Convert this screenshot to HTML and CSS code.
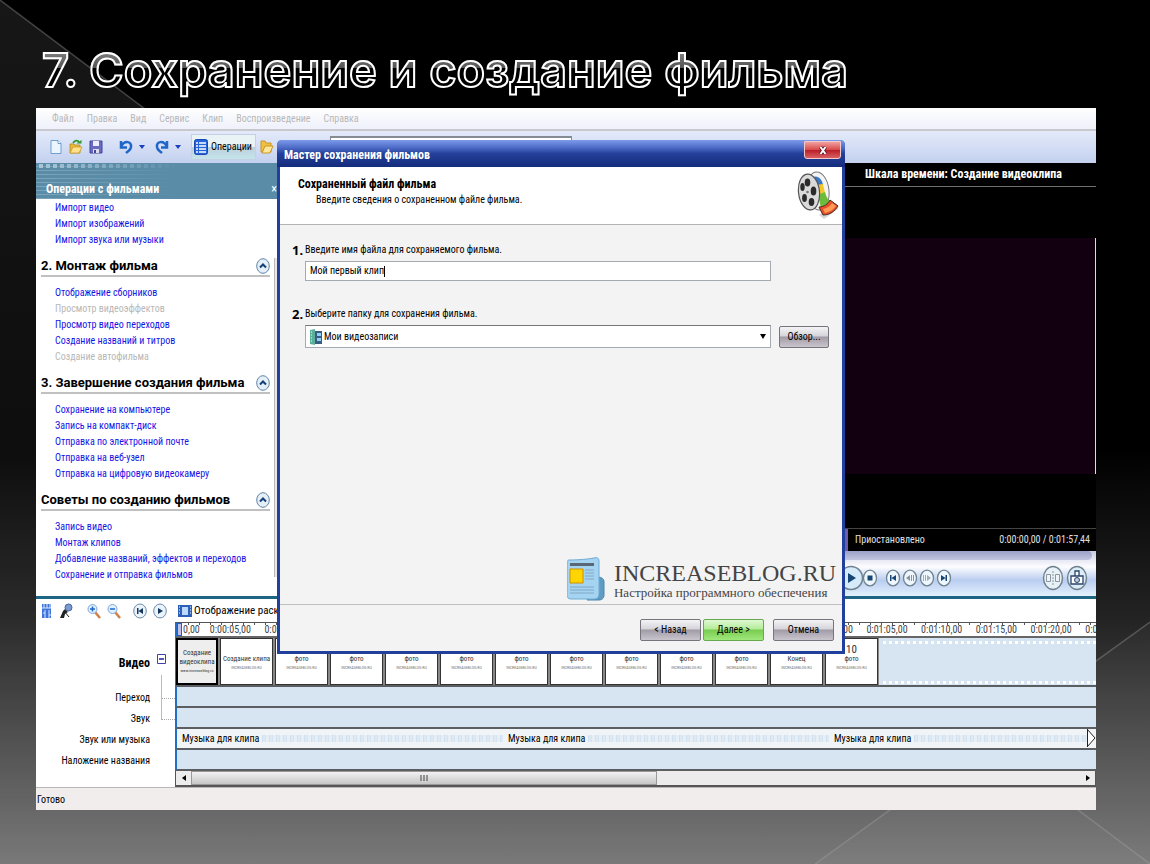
FILE: index.html
```html
<!DOCTYPE html>
<html lang="ru">
<head>
<meta charset="utf-8">
<title>7. Сохранение и создание фильма</title>
<meta name="viewport" content="width=device-width, initial-scale=1">
<link rel="stylesheet" href="styles.css">
</head>
<body>
<svg class="backdrop" viewBox="0 0 1150 864" preserveAspectRatio="none" aria-hidden="true">
  <defs>
    <linearGradient id="facet" x1="0" y1="0" x2="0" y2="1"><stop offset="0" stop-color="#fff" stop-opacity=".09"/><stop offset="1" stop-color="#fff" stop-opacity=".02"/></linearGradient>
  </defs>
  <path d="M0 0L1150 864H0z" fill="url(#facet)"/>
  <path d="M1150 622V864H815z" fill="#fff" fill-opacity=".03"/>
  <path d="M0 0L1150 864M1150 622L815 864" fill="none" stroke="#aaa" stroke-opacity=".35" stroke-width="1.500"/>
</svg>
<main class="slide">
  <h1 class="slide-title">7. Сохранение и создание фильма</h1>

  <div class="app">
    <nav class="menu">
      <a href="#">Файл</a><a href="#">Правка</a><a href="#">Вид</a><a href="#">Сервис</a><a href="#">Клип</a><a href="#">Воспроизведение</a><a href="#">Справка</a>
    </nav>
    <div class="toolbar">
      <button class="tool" aria-label="Создать"><svg width="14" height="16" viewBox="0 0 14 16"><path d="M2 1.500h7l3 3v10H2z" fill="#e9f5ff" stroke="#6f9fd0"/><path d="M9 1.500v3h3" fill="#fff" stroke="#6f9fd0"/></svg></button>
      <button class="tool" aria-label="Открыть"><svg width="14" height="16" viewBox="0 0 14 16"><path d="M1 5h4l1 1h5v8H1z" fill="#e9b93c" stroke="#b98a1e" stroke-width=".8"/><path d="M1 14L4 8h9l-3 6z" fill="#ffe28a" stroke="#c89a2a" stroke-width=".8"/><path d="M4 4c2-3 5-3 6-.5" fill="none" stroke="#2b9a2b" stroke-width="1.800"/><path d="M7.500 4.500h5V1z" fill="#2b9a2b"/></svg></button>
      <button class="tool" aria-label="Сохранить"><svg width="14" height="16" viewBox="0 0 14 16"><path d="M1 2h12v12H1z" fill="#6a6ac0" stroke="#45459a"/><path d="M4 2h6v5H4z" fill="#eef"/><path d="M4 10h6v4H4z" fill="#dde"/><path d="M5 11h2v3H5z" fill="#45459a"/></svg></button>
      <button class="tool tool-arrow" aria-label="Отменить"><svg width="28" height="16" viewBox="0 0 28 16"><path d="M2 2v6.500h6M2 8C5 1 13 2 12 8c0 3-3 4-5 6" fill="none" stroke="#1f66c8" stroke-width="2.500"/><path d="M20 6h6l-3 4z" fill="#1c40c0"/></svg></button>
      <button class="tool tool-arrow" aria-label="Вернуть"><svg width="28" height="16" viewBox="0 0 28 16"><path d="M12 2v6.500H6M12 8C9 1 1 2 2 8c0 3 3 4 5 6" fill="none" stroke="#1f66c8" stroke-width="2.500"/><path d="M20 6h6l-3 4z" fill="#1c40c0"/></svg></button>
      <button class="tool-tasks"><svg width="14" height="16" viewBox="0 0 14 16"><rect x=".5" y=".5" width="13" height="15" rx="2" fill="#2565dc" stroke="#1848b0"/><path d="M2 4h2M2 7h2M2 10h2M2 13h2M5 4h7M5 7h7M5 10h7M5 13h7" stroke="#fff" stroke-width="1.300"/></svg>Операции</button>
      <button class="tool" aria-label="Сборники"><svg width="14" height="16" viewBox="0 0 14 16"><path d="M1 2h4l1 2h5v9H1z" fill="#f0c040" stroke="#c8962a"/><path d="M2 14l3-7h8l-3 7z" fill="#ffe698" stroke="#c8962a"/></svg></button>
      <span class="collection"></span>
    </div>

    <div class="workspace">
      <aside class="tasks">
        <header class="tasks-head"><h2>Операции с фильмами</h2><button class="tasks-close" aria-label="Закрыть">×</button></header>
        <div class="tasks-body">
          <div class="tasks-content">
            <ul><li><a href="#">Импорт видео</a></li><li><a href="#">Импорт изображений</a></li><li><a href="#">Импорт звука или музыки</a></li></ul>
            <section>
              <h3>2. Монтаж фильма <button class="fold" aria-label="Свернуть"><svg width="14" height="16" viewBox="0 0 14 16"><ellipse cx="7" cy="8" rx="6.300" ry="7.300" fill="#e4eff8" stroke="#5f84a8"/><path d="M4 9.500l3-3 3 3" fill="none" stroke="#153f78" stroke-width="2"/></svg></button></h3>
              <ul><li><a href="#">Отображение сборников</a></li><li class="off">Просмотр видеоэффектов</li><li><a href="#">Просмотр видео переходов</a></li><li><a href="#">Создание названий и титров</a></li><li class="off">Создание автофильма</li></ul>
            </section>
            <section>
              <h3>3. Завершение создания фильма <button class="fold" aria-label="Свернуть"><svg width="14" height="16" viewBox="0 0 14 16"><ellipse cx="7" cy="8" rx="6.300" ry="7.300" fill="#e4eff8" stroke="#5f84a8"/><path d="M4 9.500l3-3 3 3" fill="none" stroke="#153f78" stroke-width="2"/></svg></button></h3>
              <ul><li><a href="#">Сохранение на компьютере</a></li><li><a href="#">Запись на компакт-диск</a></li><li><a href="#">Отправка по электронной почте</a></li><li><a href="#">Отправка на веб-узел</a></li><li><a href="#">Отправка на цифровую видеокамеру</a></li></ul>
            </section>
            <section>
              <h3>Советы по созданию фильмов <button class="fold" aria-label="Свернуть"><svg width="14" height="16" viewBox="0 0 14 16"><ellipse cx="7" cy="8" rx="6.300" ry="7.300" fill="#e4eff8" stroke="#5f84a8"/><path d="M4 9.500l3-3 3 3" fill="none" stroke="#153f78" stroke-width="2"/></svg></button></h3>
              <ul><li><a href="#">Запись видео</a></li><li><a href="#">Монтаж клипов</a></li><li><a href="#">Добавление названий, эффектов и переходов</a></li><li><a href="#">Сохранение и отправка фильмов</a></li></ul>
            </section>
          </div>
          <span class="tasks-thumb"></span>
        </div>
      </aside>

      <section class="monitor">
        <h2 class="monitor-title">Шкала времени: Создание видеоклипа</h2>
        <div class="screen"><div class="frame"></div></div>
        <div class="monitor-status"><span>Приостановлено</span><span class="clock">0:00:00,00 / 0:01:57,44</span></div>
        <div class="controls">
          <div class="seek"></div>
          <div class="buttons">
            <button class="round big" aria-label="Воспроизвести"><svg width="28" height="28" viewBox="0 0 28 28"><circle cx="14" cy="14" r="11.500" fill="#d5ebfa" stroke="#71828f" stroke-width="1.500"/><path d="M11 9l8 5-8 5z" fill="#174674"/></svg></button>
            <button class="round" aria-label="Стоп"><svg width="16" height="18" viewBox="0 0 16 18"><ellipse cx="8" cy="9" rx="6.500" ry="7.800" fill="#eef7fd" stroke="#71828f" stroke-width="1.300"/><path d="M5.500 6.500h5v5h-5z" fill="#174674"/></svg></button>
            <button class="round gap" aria-label="В начало"><svg width="16" height="18" viewBox="0 0 16 18"><ellipse cx="8" cy="9" rx="6.500" ry="7.800" fill="#eef7fd" stroke="#71828f" stroke-width="1.300"/><path d="M5 6h1.500v6H5zM11 6v6L6.500 9z" fill="#174674"/></svg></button>
            <button class="round" aria-label="Кадр назад"><svg width="16" height="18" viewBox="0 0 16 18"><ellipse cx="8" cy="9" rx="6.500" ry="7.800" fill="#eef7fd" stroke="#71828f" stroke-width="1.300"/><path d="M8 6v6L4 9zM9 6h1v6H9zM11 6h1v6h-1z" fill="#8a949c"/></svg></button>
            <button class="round" aria-label="Кадр вперед"><svg width="16" height="18" viewBox="0 0 16 18"><ellipse cx="8" cy="9" rx="6.500" ry="7.800" fill="#eef7fd" stroke="#71828f" stroke-width="1.300"/><path d="M8 6v6l4-3zM6 6h1v6H6zM4 6h1v6H4z" fill="#a5adb4"/></svg></button>
            <button class="round" aria-label="В конец"><svg width="16" height="18" viewBox="0 0 16 18"><ellipse cx="8" cy="9" rx="6.500" ry="7.800" fill="#eef7fd" stroke="#71828f" stroke-width="1.300"/><path d="M9.500 6H11v6H9.500zM5 6v6l4.500-3z" fill="#174674"/></svg></button>
            <button class="round end" aria-label="Разделить"><svg width="22" height="26" viewBox="0 0 22 26"><ellipse cx="11" cy="13" rx="9.500" ry="11.500" fill="#e6f1f8" stroke="#71828f" stroke-width="1.500"/><path d="M4.500 9.500h4v7h-4zM13.500 9.500h4v7h-4z" fill="#eef4f8" stroke="#8d979f"/><path d="M11 6v14" stroke="#8d979f" stroke-dasharray="2 1"/></svg></button>
            <button class="round" aria-label="Снимок"><svg width="22" height="26" viewBox="0 0 22 26"><ellipse cx="11" cy="13" rx="9.500" ry="11.500" fill="#dbecf8" stroke="#71828f" stroke-width="1.500"/><path d="M5 11h12v8H5zM9 6h4v5H9z" fill="#fff" stroke="#2a4468" stroke-width="1.300"/><circle cx="11" cy="15" r="2.500" fill="#b9cde0" stroke="#2a4468"/></svg></button>
          </div>
        </div>
      </section>
    </div>

    <section class="timeline">
      <div class="timeline-tools">
        <button class="tool" aria-label="Уровни звука"><svg width="12" height="16" viewBox="0 0 12 16"><path d="M1 1h9v14H1z" fill="#3f74dc"/><path d="M1 5h9M3 1v4M6 1v4M9 1v4M4 7v8M8 7v8M4 10H2M8 12h2" stroke="#dce9ff"/></svg></button>
        <button class="tool" aria-label="Комментарий"><svg width="14" height="16" viewBox="0 0 14 16"><path d="M1 15l3-7 2-2 3 3-3 2-1 4z" fill="#222"/><path d="M5 8l5 6" stroke="#222"/><circle cx="9.500" cy="4.500" r="3.500" fill="#7c9ad0" stroke="#4464a0"/></svg></button>
        <button class="tool spaced" aria-label="Увеличить"><svg width="14" height="16" viewBox="0 0 14 16"><path d="M8 9l5 6" stroke="#d08048" stroke-width="2.500"/><circle cx="5.500" cy="6" r="4.500" fill="#dff0ff" stroke="#7fa6d8"/><path d="M3 6h5M5.500 3.500v5" stroke="#1f66c8" stroke-width="1.500"/></svg></button>
        <button class="tool" aria-label="Уменьшить"><svg width="14" height="16" viewBox="0 0 14 16"><path d="M8 9l5 6" stroke="#d08048" stroke-width="2.500"/><circle cx="5.500" cy="6" r="4.500" fill="#dff0ff" stroke="#7fa6d8"/><path d="M3 6h5" stroke="#1f66c8" stroke-width="1.500"/></svg></button>
        <button class="tool farther" aria-label="К началу"><svg width="14" height="16" viewBox="0 0 14 16"><ellipse cx="7" cy="8" rx="6.300" ry="7" fill="#eaf2fa" stroke="#6c8ba8"/><path d="M4 5h1.500v6H4zM10 5v6L5.500 8z" fill="#17365c"/></svg></button>
        <button class="tool" aria-label="Воспроизвести шкалу"><svg width="14" height="16" viewBox="0 0 14 16"><ellipse cx="7" cy="8" rx="6.300" ry="7" fill="#eaf2fa" stroke="#6c8ba8"/><path d="M5 5v6l5-3z" fill="#17365c"/></svg></button>
        <button class="storyboard"><svg width="14" height="14" viewBox="0 0 14 14"><path d="M0 1h14v12H0z" fill="#2b5fb8"/><path d="M4 3h6v8H4z" fill="#bcd8fa"/><path d="M1 3h1M1 6h1M1 9h1M12 3h1M12 6h1M12 9h1" stroke="#fff"/></svg>Отображение раска</button>
      </div>
      <div class="row ruler-row"><span class="label"></span>
        <div class="track ruler"><div class="codes"><span class="origin">0,00</span><span>0:00:05,00</span><span>0:00:10,00</span><span></span><span></span><span></span><span></span><span></span><span></span><span></span><span></span><span></span><span>0:01:00,00</span><span>0:01:05,00</span><span>0:01:10,00</span><span>0:01:15,00</span><span>0:01:20,00</span><span>0:0</span></div><i class="playhead"></i></div>
      </div>
      <div class="row video-row"><span class="label strong">Видео</span><button class="minus" aria-label="Свернуть дорожку"><svg width="9" height="10" viewBox="0 0 9 10"><path d="M.5.500h8v9h-8z" fill="#fff" stroke="#4040a8"/><path d="M2 5h5" stroke="#2020a0" stroke-width="1.500"/></svg></button>
        <div class="track clips">
          <div class="clip first"><b>Создание видеоклипа</b><small>www.increaseblog.ru</small></div>
          <div class="clip"><span>Создание клипа</span><small>INCREASEBLOG.RU</small></div>
          <div class="clip"><span>фото</span><small>INCREASEBLOG.RU</small></div>
          <div class="clip"><span>фото</span><small>INCREASEBLOG.RU</small></div>
          <div class="clip"><span>фото</span><small>INCREASEBLOG.RU</small></div>
          <div class="clip"><span>фото</span><small>INCREASEBLOG.RU</small></div>
          <div class="clip"><span>фото</span><small>INCREASEBLOG.RU</small></div>
          <div class="clip"><span>фото</span><small>INCREASEBLOG.RU</small></div>
          <div class="clip"><span>фото</span><small>INCREASEBLOG.RU</small></div>
          <div class="clip"><span>фото</span><small>INCREASEBLOG.RU</small></div>
          <div class="clip"><span>фото</span><small>INCREASEBLOG.RU</small></div>
          <div class="clip"><span>Конец</span><small>INCREASEBLOG.RU</small></div>
          <div class="clip numbered"><em>10</em><span>фото</span><small>INCREASEBLOG.RU</small></div>
          <div class="empty"></div>
        </div>
      </div>
      <div class="row branch"><span class="label">Переход</span><div class="track"></div></div>
      <div class="row branch"><span class="label">Звук</span><div class="track"></div></div>
      <div class="row"><span class="label">Звук или музыка</span>
        <div class="track music">
          <div class="tune">Музыка для клипа</div><div class="tune">Музыка для клипа</div><div class="tune last">Музыка для клипа</div>
          <svg width="9" height="18" viewBox="0 0 9 18"><path d="M.500 0v18M0 0l8 9-8 9" fill="#fff" stroke="#222"/></svg>
        </div>
      </div>
      <div class="row"><span class="label">Наложение названия</span><div class="track"></div></div>
      <div class="row scroll-row"><span class="label"></span>
        <div class="scroll"><button aria-label="Влево"><svg width="4" height="6" viewBox="0 0 4 6"><path d="M4 0v6L0 3z"/></svg></button><span class="thumb"><svg width="8" height="6" viewBox="0 0 8 6"><path d="M1 0v6M4 0v6M7 0v6" stroke="#444"/></svg></span><button class="to-end" aria-label="Вправо"><svg width="4" height="6" viewBox="0 0 4 6"><path d="M0 0v6l4-3z"/></svg></button></div>
      </div>
    </section>
    <footer class="status">Готово</footer>

    <form class="dialog" role="dialog" aria-labelledby="wizard-title">
      <header class="dialog-bar"><h2 id="wizard-title">Мастер сохранения фильмов</h2>
        <button type="button" class="dialog-close" aria-label="Закрыть"><svg width="10" height="9" viewBox="0 0 10 9"><path d="M2.500 1l5 7M7.500 1l-5 7" stroke="#5a1020" stroke-width="3.500"/><path d="M2.500 1l5 7M7.500 1l-5 7" stroke="#fff" stroke-width="2"/></svg></button></header>
      <div class="dialog-head">
        <div><h3>Сохраненный файл фильма</h3><p>Введите сведения о сохраненном файле фильма.</p></div>
        <svg width="42" height="50" viewBox="0 0 42 50">
          <path d="M22 44l5 4 14-10-2-6z" fill="#bbb" opacity=".6"/>
          <ellipse cx="21" cy="20" rx="11" ry="19" transform="rotate(-6 21 20)" fill="#f4f4f4" stroke="#777"/>
          <path d="M16 6c5-2 9 2 10 8l-6 3z" fill="#3a78c8"/><path d="M18 14l8-1 2 9-6 3z" fill="#f5c628"/><path d="M21 24l7-3c1 4 3 8 5 10l-9 6z" fill="#6cbb3c"/><path d="M22 36c5 0 9-3 11-7l8 6c-3 5-8 9-15 9z" fill="#e8502a" stroke="#4a2a20"/>
          <path d="M26 38c5-1 8-4 9-6l4 3c-3 4-7 6-11 7z" fill="#ff9a58"/>
          <ellipse cx="12" cy="21" rx="10.500" ry="18" transform="rotate(-6 12 21)" fill="#dadada" stroke="#555" stroke-width="1.200"/>
          <g fill="#2b2b2b"><ellipse cx="10.500" cy="11.500" rx="2.800" ry="4"/><ellipse cx="16.500" cy="20" rx="2.800" ry="4.500"/><ellipse cx="5.500" cy="16" rx="2.200" ry="4"/><ellipse cx="7.500" cy="27" rx="2.400" ry="4"/><ellipse cx="14.500" cy="31" rx="2.800" ry="4"/></g><circle cx="10.500" cy="21" r="1.300" fill="#777"/>
        </svg>
      </div>
      <div class="dialog-body">
        <div class="field"><label for="movie-name"><b>1.</b>Введите имя файла для сохраняемого фильма.</label>
          <div class="text-box"><input id="movie-name" type="text" value="Мой первый клип"><i class="caret"></i></div></div>
        <div class="field"><label for="movie-folder"><b>2.</b>Выберите папку для сохранения фильма.</label>
          <div class="folder-row"><div class="select-box"><svg width="12" height="16" viewBox="0 0 12 16"><path d="M0 1l5-1v16l-5-1z" fill="#5bb09a"/><path d="M5 2h7v13H5z" fill="#3a5c80"/><path d="M7 4h4v3H7zM7 9h4v3H7z" fill="#8fd0f8"/><path d="M1 3h1M1 6h1M1 9h1M1 12h1" stroke="#e8fff4"/></svg>
            <select id="movie-folder"><option>Мои видеозаписи</option></select><svg width="6" height="5" viewBox="0 0 6 5"><path d="M0 0h6L3 5z"/></svg></div>
            <button type="button" class="btn browse">Обзор...</button></div></div>
        <div class="brand">
          <svg width="38" height="44" viewBox="0 0 38 44"><path d="M30 20c5 0 7 2 7 5v13c0 4-3 5-5 5H20z" fill="#5f9cc4" stroke="#4a86ae"/><path d="M2 3C12 3 22 2 27 1c3-1 5 0 5 3v32c0 5-2 6-6 6H4c-3 0-4-2-4-4V5c0-1 1-2 2-2z" fill="#a5d3f2" stroke="#70acd4"/><path d="M3 6h24v3H3z" fill="#5a6875"/><path d="M18 13h9M18 16h9M18 19h9M18 22h9M3 30h24M3 33h24M3 36h24" stroke="#80a9c6"/><path d="M3 12h13v14H3z" fill="#ffd500" stroke="#d09000"/></svg>
          <div><strong>INCREASEBLOG.RU</strong><span>Настройка программного обеспечения</span></div>
        </div>
      </div>
      <footer class="dialog-foot"><button type="button" class="btn">&lt; Назад</button><button type="button" class="btn next">Далее &gt;</button><button type="button" class="btn cancel">Отмена</button></footer>
    </form>
  </div>
</main>
</body>
</html>
```

FILE: styles.css
```css
* { box-sizing: border-box; }
body {
  margin: 0;
  min-height: 100vh;
  font: 10px/16px "Roboto Condensed", Roboto, sans-serif;
  color: #000;
  background: linear-gradient(#000 0%, #000 52%, #242424 72%, #777 100%) #000;
}
h1, h2, h3, p, ul { margin: 0; padding: 0; font-weight: normal; font-size: inherit; }
ul { list-style: none; }
a { color: inherit; text-decoration: none; }
i, em { font-style: normal; }
svg { display: block; flex: none; }
button { padding: 0; border: 0; background: none; font: inherit; color: inherit; }
input, select { font: inherit; color: inherit; }

.backdrop { position: fixed; inset: 0; width: 100%; height: 100%; z-index: -1; }
.slide { padding: 42px 54px 54px 36px; }
.slide-title {
  width: max-content;
  padding-left: 6px;
  margin-bottom: 10px;
  font: 600 47px/56px "Inter", "Open Sans", sans-serif;
  color: transparent;
  background: linear-gradient(#999 0%, #555 46%, #000 47%);
  background-clip: text;
  -webkit-background-clip: text;
  -webkit-text-stroke: 2px #fff;
}

.app { position: relative; background: #fff; }
.menu {
  display: flex; align-items: center; gap: 13px;
  height: 23px; padding-left: 16px;
  color: #b8b8b8;
  background: linear-gradient(#fff, #eef0fb);
  border-bottom: 2px solid #c9c9cd;
}
.toolbar {
  display: flex; align-items: center; gap: 6px;
  height: 32px; padding-left: 13px;
  background: linear-gradient(#e4eafa, #c3d1ef);
}
.tool-arrow { margin-left: 10px; margin-right: -6px; }
.tool-arrow + .tool-arrow { margin-left: 8px; }
.tool-arrow + .tool-tasks { margin-left: 8px; }
.tool-tasks {
  display: flex; align-items: center; gap: 3px;
  min-width: 65px; height: 26px; padding: 0 2px;
  background: linear-gradient(#e9f2f4 0 50%, #bccfdc 50%, #c5e4ea);
  border: 1px solid #c4d0e4;
}
.tool-tasks + .tool { margin-left: -2px; }
.collection { align-self: flex-start; width: 242px; height: 10px; margin: 5px 0 0 50px; background: #fff; border: 1px solid #858b94; border-top-width: 2px; }

.workspace { display: flex; height: 436px; border-bottom: 3px solid #1c6684; }
.tasks { width: 241px; }
.tasks-head {
  display: flex; align-items: flex-end; justify-content: space-between;
  height: 36px; padding: 0 0 2px 10px;
  font-size: 12px; color: #fff;
  background:
    linear-gradient(90deg, transparent, #5a8ca8 140px),
    repeating-linear-gradient(90deg, transparent 0 3px, #a9c8d8 3px 7px) 0 1px / 100% 4px no-repeat,
    repeating-linear-gradient(#5a8ca8 0 3px, #7ba6bc 3px 4px);
}
.tasks-head h2 { font-weight: bold; }
.tasks-body { display: flex; padding-top: 1px; }
.tasks-content { flex: 1; min-width: 0; padding: 0 4px 0 5px; color: #1414e6; }
.tasks-content li { padding-left: 14px; white-space: nowrap; }
.tasks-content .off { color: #b8b8b8; }
.tasks-content section { padding-top: 8px; }
.tasks-content h3 {
  display: flex; justify-content: space-between; align-items: center;
  height: 21px; margin-bottom: 8px;
  font: bold 13px/20px Roboto, sans-serif;
  color: #000; white-space: nowrap;
  border-bottom: 2px solid #c0c0c0;
}
.tasks-thumb { width: 3px; height: 319px; margin-top: 58px; background: #e8e8e8; border-left: 1px solid #b8b8b8; }

.monitor { display: flex; flex-direction: column; width: 251px; margin-left: auto; background: #000; color: #e0e0e0; }
.monitor-title { height: 24px; padding-right: 14px; font-size: 12px; font-weight: bold; line-height: 22px; color: #fff; text-align: center; border-bottom: 1px solid #707070; }
.screen { flex: 1; padding: 51px 0 54px; border-bottom: 1px solid #444; }
.frame { height: 100%; background: #120010; border-right: 1px solid #ddd; }
.monitor-status { display: flex; justify-content: space-between; padding: 3px 6px 3px 7px; border-left: 3px solid #6a5cae; }
.controls { background: linear-gradient(#c6cbe4, #fdfdff 35%, #b9cdf0 65%, #e3f1fd); }
.seek { height: 9px; margin-right: 4px; background: linear-gradient(#9aa0c8, #c2c6e0); border-radius: 0 5px 5px 0; }
.buttons { display: flex; align-items: center; height: 36px; }
.big { margin-left: -8px; margin-right: -4px; }
.gap { margin-left: 7px; }
.round + .round:not(.gap):not(.end):not(:last-child) { margin-left: 1px; }
.end { margin-left: auto; }
.round:last-child { margin: 0 8px 0 2px; }

.timeline-tools { display: flex; align-items: center; gap: 6px; height: 23px; padding-left: 5px; }
.spaced { margin-left: 8px; }
.farther { margin-left: 6px; }
.storyboard { display: flex; align-items: center; gap: 2px; margin-left: 5px; font-size: 11px; }
.row { display: flex; align-items: center; position: relative; }
.label { width: 139px; padding-right: 25px; text-align: right; white-space: nowrap; }
.strong { font-size: 12px; font-weight: bold; }
.track { flex: 1; min-width: 0; height: 21px; background: #d7e5f2; border-left: 2px solid #1f6fc8; border-bottom: 2px solid #5c5f62; overflow: hidden; }
.ruler { position: relative; height: 16px; color: #444; background: #fff; border-top: 1px solid #555; border-bottom: 2px solid #666; }
.codes { display: grid; grid-template-columns: repeat(18, 1fr); margin: 0 -44px 0 -22px; line-height: 14px; background: repeating-linear-gradient(90deg, #555 0 1px, transparent 1px 11px) 0 0 / 100% 2px no-repeat; }
.origin { padding-left: 28px; }
.playhead { position: absolute; left: 0; top: 0; width: 5px; height: 13px; background: #c3bfe8; border: 1px solid #2060c0; }
.minus { position: absolute; left: 121px; top: 16px; }
.video-row .track { display: flex; gap: 2px; height: 49px; border-left-width: 1px; }
.clip {
  display: flex; flex-direction: column; align-items: center; justify-content: center;
  flex: 0 0 53px; height: 47px; padding-top: 4px;
  font-size: 7px; line-height: 9px; color: #333; text-align: center;
  background: #fff; border: 1px solid #333; outline: 1px solid #888;
  overflow: hidden;
}
.clip em { font-size: 11px; line-height: 11px; }
.clip small { font-size: 4px; line-height: 8px; color: #777; }
.numbered { padding: 0 0 7px; }
.first { flex-basis: 42px; padding: 0; background: #eee; border: 2px solid #000; }
.first b { font-weight: normal; }
.first small { color: #333; }
.empty {
  flex: 1;
  background:
    repeating-linear-gradient(90deg, transparent 0 3px, #fff 3px 6px) 0 3px / 100% 3px no-repeat,
    repeating-linear-gradient(90deg, transparent 0 3px, #fff 3px 6px) 0 43px / 100% 3px no-repeat;
}
.branch::before { content: ""; position: absolute; left: 125px; top: -12px; width: 13px; height: 23px; border-left: 1px solid #bbb; border-bottom: 1px dotted #aaa; }
.music { display: flex; background: #f1f4f7; }
.tune { display: flex; align-items: center; flex: 0 0 326px; padding-left: 5px; line-height: 19px; white-space: nowrap; }
.tune::after { content: ""; flex: 1; height: 7px; margin-left: 3px; background: repeating-linear-gradient(90deg, #cfe0f1 0 1px, #dfe9f4 1px 3px, #d6e4f2 3px 4px, #e6eef6 4px 7px); }
.last { flex: 1; min-width: 0; }
.scroll { display: flex; flex: 1; height: 16px; background: #ececec; border: 1px solid #555; border-top: 0; border-bottom-width: 2px; }
.scroll button { display: grid; place-items: center; width: 15px; }
.thumb { display: grid; place-items: center; flex: 0 0 466px; background: linear-gradient(#f2f2f2, #c6c6c6); border: 1px solid #999; }
.scroll .to-end { margin-left: auto; }
.status { padding: 4px 1px 2px; background: #f0edec; border-top: 1px solid #b8b8b8; }

.dialog {
  position: absolute; top: 32px; left: 241px; right: 251px;
  display: flex; flex-direction: column;
  min-height: 514px;
  background: #f3f3f3;
  border: solid #213f9c; border-width: 0 3px 3px;
  border-radius: 5px 5px 0 0;
}
.dialog-bar {
  display: flex; justify-content: space-between; align-items: center;
  height: 27px; margin: 0 -3px; padding: 0 4px 0 7px;
  font-size: 12px; color: #fff;
  background: linear-gradient(#7d9bea, #4a68c4 30%, #24409a 50%, #142c7c);
  border-radius: 5px 5px 0 0;
}
.dialog-bar h2 { font-weight: bold; padding-top: 3px; }
.dialog-close { display: grid; place-items: center; align-self: flex-start; width: 37px; height: 18px; margin-top: 1px; background: linear-gradient(#f0a0a0, #d84848 50%, #b81c28 50%, #d86060); border: 1px solid #f2c8c8; border-radius: 0 0 3px 3px; }
.dialog-head { display: flex; justify-content: space-between; height: 58px; padding: 4px 3px 0 18px; background: #fff; border-bottom: 1px solid #b4b4b4; }
.dialog-head > div { padding-top: 5px; }
.dialog-head h3 { font-size: 12px; font-weight: bold; }
.dialog-head p { padding-left: 18px; line-height: 15px; }
.dialog-body { flex: 1; display: flex; flex-direction: column; padding: 15px 3px 3px 12px; }
.field { padding-bottom: 23px; }
.field label { display: flex; align-items: center; height: 20px; }
.field b { width: 13px; font: bold 13px/20px "Noto Sans", sans-serif; }
.text-box, .select-box { display: flex; align-items: center; height: 20px; background: #fff; border: 1px solid #a4aab2; }
.text-box { margin: 1px 68px 0 13px; padding-left: 4px; }
.text-box input { field-sizing: content; padding: 0; border: 0; outline: 0; background: none; }
.caret { width: 1px; height: 11px; background: #000; }
.folder-row { display: flex; gap: 8px; align-items: flex-end; margin: 1px 10px 0 13px; }
.select-box { flex: 1; height: 23px; padding: 0 4px; border-top-color: #777; }
.select-box select { flex: 1; appearance: none; padding: 0 2px; border: 0; background: none; }
.btn { width: 61px; height: 22px; background: linear-gradient(#f4f4f6, #d6d4da 45%, #a19ba6 50%, #c9c5cd); border: 1px solid #77757c; border-radius: 2px; }
.browse { width: 50px; }
.next { background: linear-gradient(#e0f8d4, #b4ec98 45%, #78cc50 50%, #a0e87c); border-color: #68a850; }
.brand { display: flex; align-items: flex-end; justify-content: flex-end; gap: 9px; margin: auto 3px 0 0; font-family: "Liberation Serif", serif; color: #444; }
.brand div { display: flex; flex-direction: column; }
.brand strong { font-weight: normal; font-size: 24px; line-height: 24px; }
.brand span { font-size: 13px; }
.dialog-foot { display: flex; justify-content: flex-end; gap: 2px; padding: 14px 8px 10px; border-top: 1px solid #c0c0c0; }
.cancel { margin-left: 7px; }
```
